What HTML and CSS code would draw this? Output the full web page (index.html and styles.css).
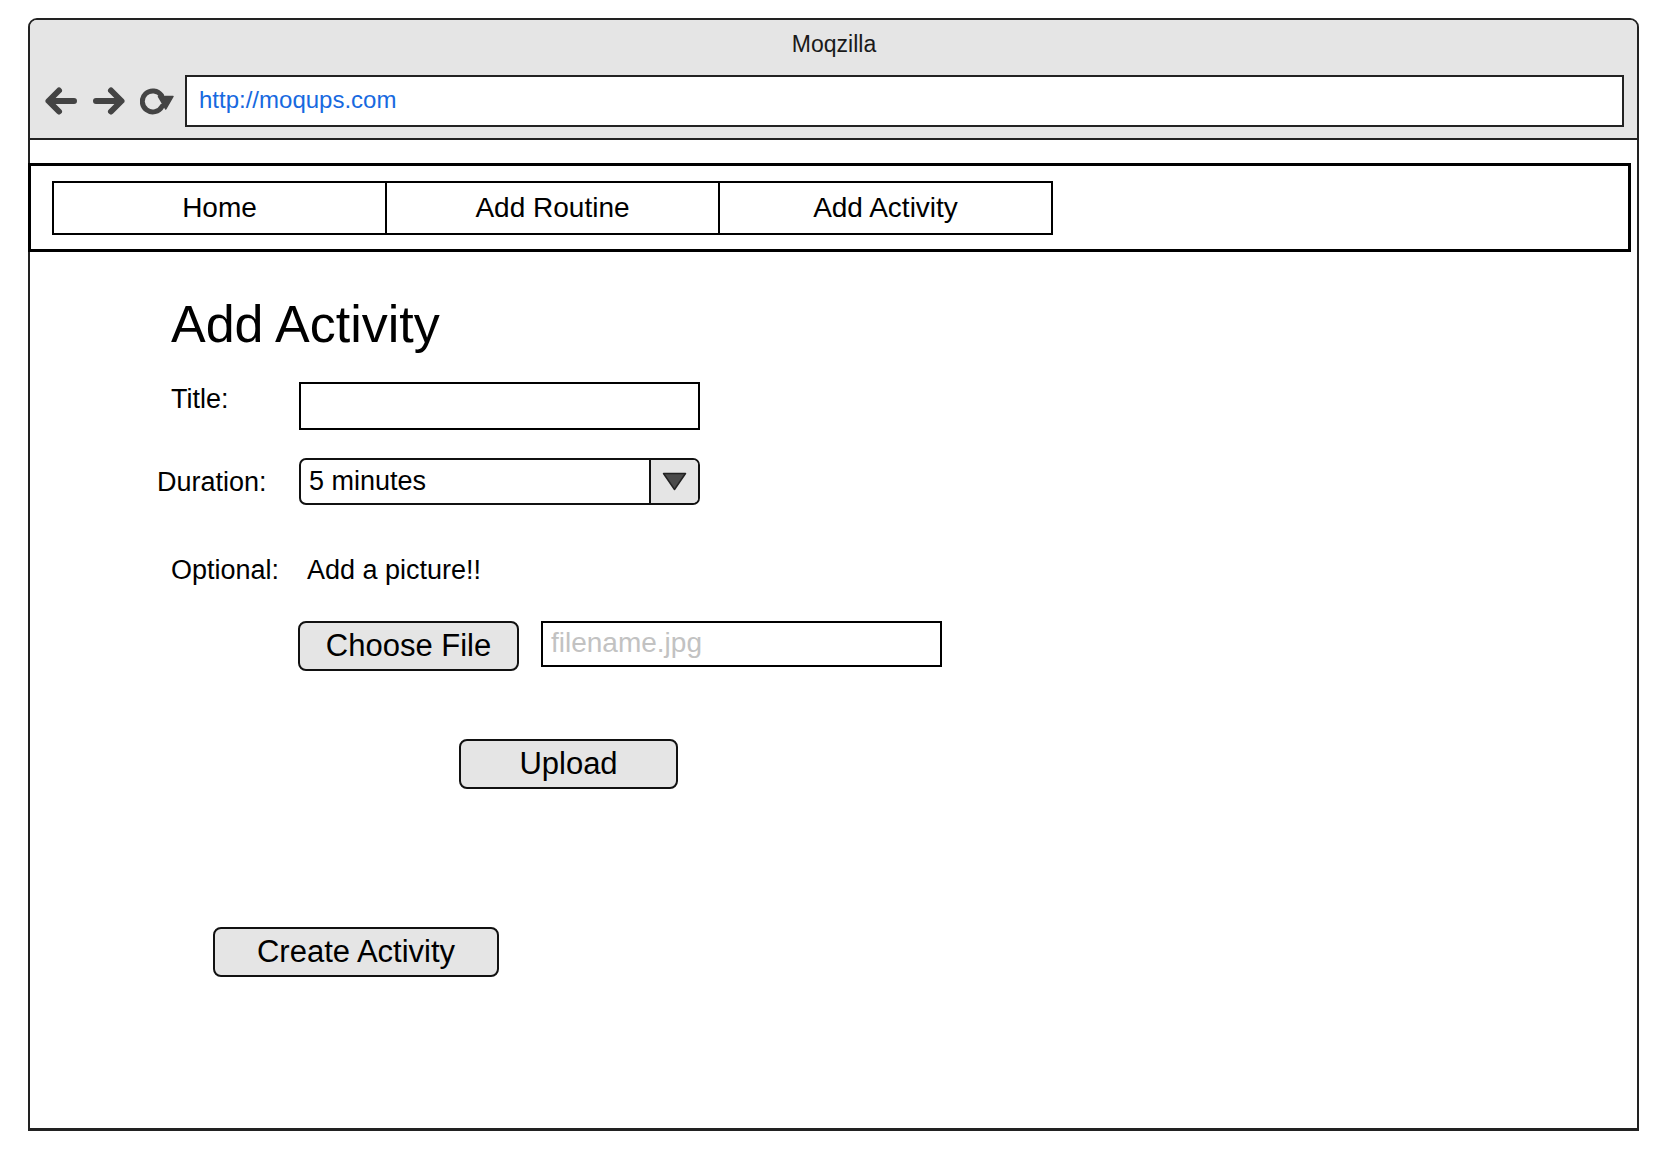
FILE: index.html
```html
<!DOCTYPE html>
<html lang="en">
<head>
<meta charset="utf-8">
<title>Moqzilla</title>
<link rel="stylesheet" href="styles.css">
</head>
<body>
<div class="window">
  <div class="titlebar">
    <div class="win-title">Moqzilla</div>
    <div class="toolbar">
      <svg class="tb-icon" viewBox="0 0 34 34" width="34" height="34" aria-hidden="true">
        <path d="M30 17 H5 M15 6.5 L4.5 17 L15 27.5" fill="none" stroke="#444" stroke-width="6" stroke-linecap="round" stroke-linejoin="round"/>
      </svg>
      <svg class="tb-icon" viewBox="0 0 34 34" width="34" height="34" aria-hidden="true">
        <path d="M4 17 H29 M19 6.5 L29.5 17 L19 27.5" fill="none" stroke="#444" stroke-width="6" stroke-linecap="round" stroke-linejoin="round"/>
      </svg>
      <svg class="tb-icon" viewBox="0 0 34 34" width="34" height="34" aria-hidden="true">
        <path d="M22.1 22.3 A10.5 10.5 0 1 1 21.5 11.5" fill="none" stroke="#444" stroke-width="5" stroke-linecap="round"/>
        <polygon points="18.5,12.5 33,12.5 25.8,25" fill="#444" stroke="#444" stroke-width="1.5" stroke-linejoin="round"/>
      </svg>
      <div class="address">http://moqups.com</div>
    </div>
  </div>

  <nav class="navbar">
    <div class="tab">Home</div>
    <div class="tab">Add Routine</div>
    <div class="tab">Add Activity</div>
  </nav>

  <main class="content">
    <h1 class="heading">Add Activity</h1>

    <div class="row row-title">
      <span class="label label-title">Title:</span>
      <div class="text-input"></div>
    </div>

    <div class="row row-duration">
      <span class="label label-duration">Duration:</span>
      <div class="select">
        <span class="select-value">5 minutes</span>
        <span class="select-btn">
          <svg viewBox="0 0 25 19" width="25" height="19" aria-hidden="true">
            <polygon points="1.5,1.5 23.5,1.5 12.5,17.5" fill="#4a4a4a" stroke="#222" stroke-width="1.5" stroke-linejoin="round"/>
          </svg>
        </span>
      </div>
    </div>

    <div class="row row-optional">
      <span class="label label-optional">Optional:</span>
      <span class="hint">Add a picture!!</span>
    </div>

    <div class="row row-file">
      <button class="btn btn-choose" type="button">Choose File</button>
      <div class="file-input">filename.jpg</div>
    </div>

    <button class="btn btn-upload" type="button">Upload</button>

    <button class="btn btn-create" type="button">Create Activity</button>
  </main>
</div>
</body>
</html>
```

FILE: styles.css
```css
html, body {
  margin: 0;
  padding: 0;
  background: #ffffff;
}

body {
  font-family: "Liberation Sans", Arial, Helvetica, sans-serif;
  color: #000;
}

.window {
  box-sizing: border-box;
  margin: 18px 0 0 28px;
  width: 1611px;
  height: 1113px;
  border: 2px solid #222;
  border-bottom-width: 3px;
  border-radius: 9px 9px 0 0;
  background: #fff;
}

.titlebar {
  box-sizing: border-box;
  height: 120px;
  padding: 10px 13px 0 14px;
  background: #e5e5e5;
  border-bottom: 2px solid #222;
  border-radius: 7px 7px 0 0;
}

.win-title {
  text-align: center;
  font-size: 23px;
  line-height: 28px;
  color: #1a1a1a;
}

.toolbar {
  display: flex;
  align-items: center;
  margin-top: 17px;
  height: 52px;
}

.tb-icon {
  flex: none;
  margin-right: 14px;
}

.tb-icon:nth-of-type(3) {
  margin-right: 11px;
}

.address {
  box-sizing: border-box;
  flex: 1;
  height: 52px;
  border: 2px solid #222;
  background: #fff;
  padding-left: 12px;
  font-size: 24px;
  line-height: 46px;
  color: #1769e0;
}

.navbar {
  display: flex;
  margin: 23px 6px 0 -2px;
  border: 3px solid #000;
  padding: 15px 0 14px 21px;
}

.tab {
  box-sizing: border-box;
  width: 335px;
  height: 54px;
  border: 2px solid #000;
  text-align: center;
  font-size: 28px;
  line-height: 50px;
}

.tab + .tab {
  margin-left: -2px;
}

.content {
  display: flex;
  flex-direction: column;
  align-items: flex-start;
  padding: 42px 0 0 141px;
}

.heading {
  margin: 0;
  font-size: 52px;
  line-height: 60px;
  font-weight: normal;
}

.row {
  display: flex;
}

.label {
  font-size: 27px;
  line-height: 32px;
  flex: none;
}

.row-title {
  margin-top: 28px;
  align-items: flex-start;
}

.label-title {
  width: 128px;
  margin-top: 1px;
}

.text-input {
  box-sizing: border-box;
  width: 401px;
  height: 48px;
  border: 2px solid #000;
}

.row-duration {
  margin-top: 28px;
  align-items: center;
}

.label-duration {
  width: 142px;
  margin-left: -14px;
}

.select {
  box-sizing: border-box;
  display: flex;
  width: 401px;
  height: 47px;
  border: 2px solid #111;
  border-radius: 7px;
}

.select-value {
  flex: 1;
  padding-left: 8px;
  font-size: 27px;
  line-height: 43px;
}

.select-btn {
  box-sizing: border-box;
  width: 49px;
  border-left: 2px solid #111;
  background: #e5e5e5;
  border-radius: 0 5px 5px 0;
  display: flex;
  align-items: center;
  justify-content: center;
}

.row-optional {
  margin-top: 49px;
  font-size: 27px;
  line-height: 32px;
}

.label-optional {
  width: 136px;
}

.row-file {
  margin-top: 35px;
  margin-left: 127px;
  align-items: flex-start;
  gap: 22px;
}

.btn {
  box-sizing: border-box;
  height: 50px;
  margin: 0;
  padding: 0;
  border: 2px solid #111;
  border-radius: 8px;
  background: #e5e5e5;
  font-family: "Liberation Sans", Arial, Helvetica, sans-serif;
  font-size: 31px;
  line-height: 44px;
  color: #000;
  text-align: center;
}

.btn-choose {
  width: 221px;
}

.file-input {
  box-sizing: border-box;
  width: 401px;
  height: 46px;
  border: 2px solid #000;
  padding-left: 8px;
  font-size: 28px;
  line-height: 40px;
  color: #c2c2c2;
}

.btn-upload {
  width: 219px;
  margin-top: 68px;
  margin-left: 288px;
}

.btn-create {
  width: 286px;
  margin-top: 138px;
  margin-left: 42px;
}
```
